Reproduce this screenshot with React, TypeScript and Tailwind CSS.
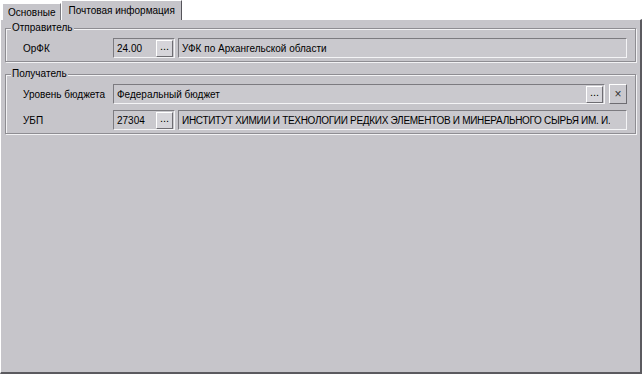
import React from 'react';

const sunken = 'border border-t-[#7c7b80] border-l-[#7c7b80] border-b-[#f4f4f6] border-r-[#f4f4f6]';

function DotsButton() {
    return (
        <div className="w-[17px] h-[17px] flex items-center justify-center bg-[#d6d5da] border border-t-white border-l-white border-b-[#6e6d72] border-r-[#6e6d72] text-[11px] leading-none text-black pb-[4px] shrink-0">
            ...
        </div>
    );
}

function Field({ value, className = '' }: { value: string; className?: string }) {
    return (
        <div className={`min-w-0 h-[20px] flex items-center px-[3px] bg-[#cac9ce] ${sunken} ${className}`}>
            <span className="overflow-hidden whitespace-nowrap">{value}</span>
        </div>
    );
}

function CodeField({ value }: { value: string }) {
    return (
        <div className={`w-[62px] h-[20px] flex items-center justify-between pl-[3px] pr-[1px] bg-[#cac9ce] ${sunken} shrink-0`}>
            <span>{value}</span>
            <DotsButton />
        </div>
    );
}

function Group({ title, children }: { title: string; children: React.ReactNode }) {
    return (
        <div className="relative mx-[4px] border border-[#8e8d92] shadow-[inset_1px_1px_0_#f2f2f4,1px_1px_0_#f2f2f4]">
            <span className="absolute left-[5px] -top-[8px] px-[1px] bg-[#c6c5ca] leading-[14px]">{title}</span>
            <div className="pt-[9px] pb-[3px] flex flex-col gap-[6px]">{children}</div>
        </div>
    );
}

function Row({ label, children }: { label: string; children: React.ReactNode }) {
    return (
        <div className="flex items-center pr-[8px]">
            <div className="w-[107px] pl-[17px] shrink-0 whitespace-nowrap">{label}</div>
            {children}
        </div>
    );
}

export default function App() {
    return (
        <div className="w-[642px] h-[374px] bg-white text-[10px] text-black flex flex-col" style={{ fontFamily: '"Liberation Sans", Arial, sans-serif' }}>
            {/* Tabs */}
            <div className="h-[19px] flex items-end pl-[2px] relative z-10">
                <div className="h-[17px] px-[5px] flex items-center bg-[#c6c5ca] border-t border-l border-white border-r border-r-[#7c7b80] mb-[-1px]">
                    Основные
                </div>
                <div className="h-[20px] px-[6px] flex items-center bg-[#c6c5ca] border-t border-l border-white border-r border-r-[#55545a] mb-[-1px]">
                    Почтовая информация
                </div>
            </div>

            {/* Page */}
            <div className="flex-1 bg-[#c6c5ca] border-t border-l border-white border-r-2 border-r-[#5b5a5f] border-b-2 border-b-[#5b5a5f] pt-[8px] flex flex-col gap-[12px]">
                <Group title="Отправитель">
                    <Row label="ОрФК">
                        <CodeField value="24.00" />
                        <Field value="УФК по Архангельской области" className="flex-1 ml-[3px]" />
                    </Row>
                </Group>

                <Group title="Получатель">
                    <Row label="Уровень бюджета">
                        <div className={`flex-1 min-w-0 h-[20px] flex items-center justify-between pl-[3px] pr-[1px] bg-[#cac9ce] ${sunken}`}>
                            <span>Федеральный бюджет</span>
                            <DotsButton />
                        </div>
                        <div className="ml-[4px] w-[18px] h-[20px] flex items-center justify-center bg-[#cac9ce] border border-t-white border-l-white border-b-[#6e6d72] border-r-[#6e6d72] text-[12px] text-[#333]">
                            ×
                        </div>
                    </Row>
                    <Row label="УБП">
                        <CodeField value="27304" />
                        <Field value="ИНСТИТУТ ХИМИИ И ТЕХНОЛОГИИ РЕДКИХ ЭЛЕМЕНТОВ И МИНЕРАЛЬНОГО СЫРЬЯ ИМ. И." className="flex-1 ml-[3px] text-[10px] tracking-[-0.3px]" />
                    </Row>
                </Group>
            </div>
        </div>
    );
}
